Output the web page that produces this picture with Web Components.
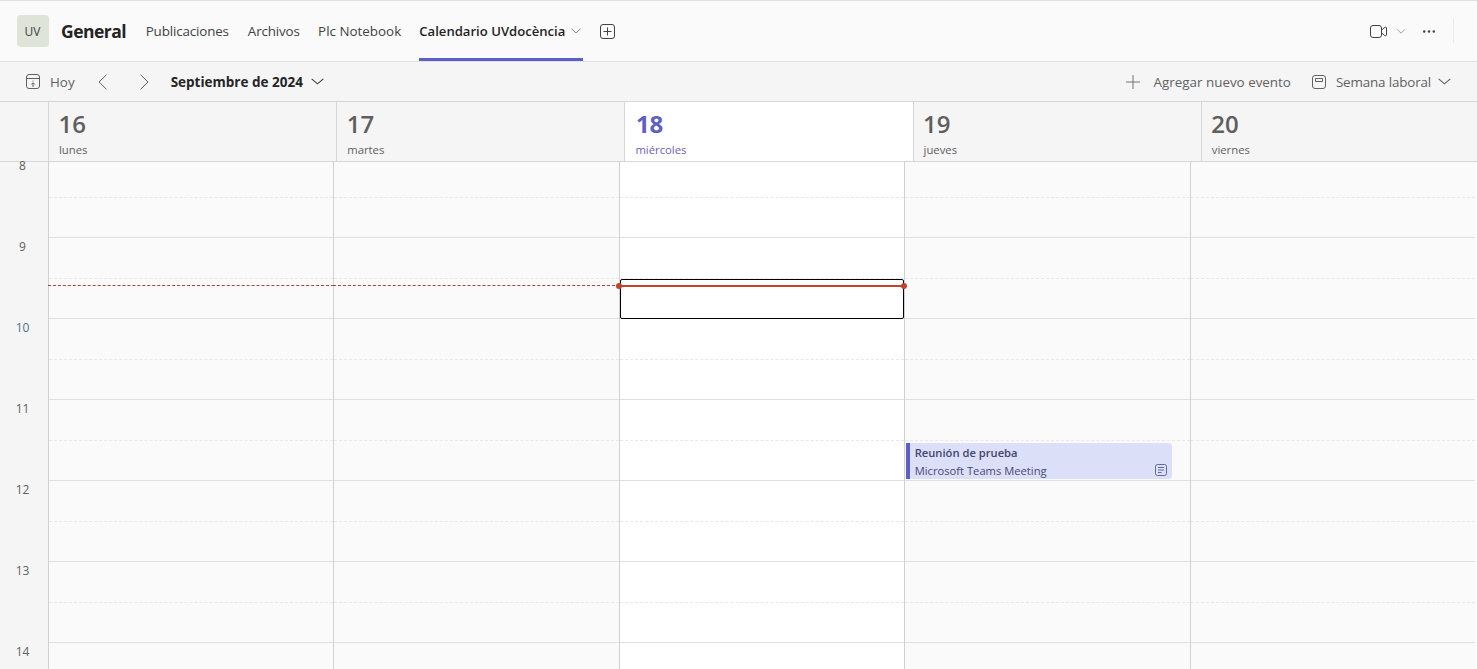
<!doctype html>
<html lang="es"><head><meta charset="utf-8"><style>
html,body{margin:0;height:100%;overflow:hidden;background:#fff}
body{font-family:"Open Sans","Noto Sans",sans-serif;color:#424242}
</style></head><body>
<teams-app>
  <channel-bar></channel-bar>
  <cal-toolbar></cal-toolbar>
  <day-header></day-header>
  <cal-grid></cal-grid>
</teams-app>
<script>
const chev=(w,h,c='currentColor')=>`<svg viewBox="0 0 12 8" width="${w}" height="${h}" fill="none" stroke="${c}" preserveAspectRatio="none"><path d="M.6 1 6 6.6 11.4 1"/></svg>`;
class Base extends HTMLElement{
  constructor(){super();this.attachShadow({mode:'open'}).innerHTML=this.markup();}
}
class ChannelBar extends Base{markup(){return `<style>
:host{display:flex;align-items:center;flex:none;height:60px;background:#fafafa;border-top:1px solid #e0e0e0;border-bottom:1px solid #e0e0e0;padding-left:17px;font-size:13.4px;color:#424242}
.av{width:32px;height:32px;border-radius:4px;background:#dfe4d8;display:flex;align-items:center;justify-content:center;font-size:12px;color:#424242;flex:none;padding-right:1px;box-sizing:border-box}
.t{font-size:17.5px;font-weight:700;color:#242424;margin:0 19.5px 0 12px;letter-spacing:-.5px}
nav{display:flex;height:100%;gap:19px}
a{display:flex;align-items:center;height:100%;box-sizing:border-box;color:#424242;white-space:nowrap;letter-spacing:-.15px}
a.plc{letter-spacing:0;margin-left:-.6px}
a.on{font-weight:600;color:#242424;gap:6px;width:164px;border-bottom:3px solid #5b5fc7;padding-top:3px;font-size:13.1px;letter-spacing:0;margin-left:-.9px}
.add{margin-left:17px;display:flex}
.r{margin-left:auto;display:flex;align-items:center;height:100%;color:#424242}
.sep{width:1px;height:24px;background:#eaeaea;margin:0 23px 0 18px}
</style>
<div class="av">UV</div><div class="t">General</div>
<nav><a>Publicaciones</a><a>Archivos</a><a class="plc">Plc Notebook</a><a class="on">Calendario UVdocència <span style="display:flex;color:#616161">${chev(10,6)}</span></a></nav>
<span class="add"><svg width="15" height="15" viewBox="0 0 15 15" fill="none" stroke="#424242"><rect x=".5" y=".5" width="14" height="14" rx="2.5"/><path d="M7.5 3.5v8M3.5 7.5h8"/></svg></span>
<div class="r">
<svg width="17" height="13" viewBox="0 0 17 13" fill="none" stroke="#424242"><rect x=".5" y=".5" width="11" height="12" rx="2.5"/><path d="M11.5 5 15 2.3c.6-.4 1.5 0 1.5.7v7c0 .7-.9 1.1-1.5.7L11.5 8"/></svg>
<span style="display:flex;margin-left:10px;color:#757575">${chev(8,5)}</span>
<svg style="margin-left:18px" width="12" height="3" viewBox="0 0 12 3" fill="#424242"><circle cx="1.2" cy="1.5" r="1.2"/><circle cx="6" cy="1.5" r="1.2"/><circle cx="10.8" cy="1.5" r="1.2"/></svg>
<div class="sep"></div></div>`}}
class CalToolbar extends Base{markup(){return `<style>
:host{display:flex;align-items:center;flex:none;height:39px;background:#f5f5f5;border-bottom:1px solid #d6d6d6;padding-left:26px;font-size:13.4px;color:#616161}
b{font-weight:700;color:#242424;font-size:13.5px;white-space:nowrap}
.i{display:flex}.sp{margin-left:auto}
span{white-space:nowrap}
</style>
<svg class="i" width="14" height="15" viewBox="0 0 14 15" fill="none" stroke="#616161"><rect x=".5" y=".5" width="13" height="14" rx="2.5"/><path d="M.5 4.5h13M7 13V9M5.2 10.5 7 8.7l1.8 1.8"/><path d="M6.6 7h.8"/></svg>
<span style="margin-left:10px">Hoy</span>
<svg style="margin-left:23px" width="9" height="16" viewBox="0 0 9 16" fill="none" stroke="#616161"><path d="M8.5.7 1 8l7.5 7.3"/></svg>
<svg style="margin-left:33px" width="9" height="16" viewBox="0 0 9 16" fill="none" stroke="#616161"><path d="M.5.7 8 8 .5 15.3"/></svg>
<b style="margin-left:22px">Septiembre de 2024</b>
<span class="i" style="margin-left:8px;color:#424242">${chev(13,7)}</span>
<svg class="sp" width="14" height="14" viewBox="0 0 14 14" stroke="#757575"><path d="M7 0v14M0 7h14"/></svg>
<span style="margin-left:14px">Agregar nuevo evento</span>
<svg style="margin-left:21px" width="14" height="14" viewBox="0 0 14 14" fill="none" stroke="#616161"><rect x=".5" y=".5" width="13" height="13" rx="2.5"/><path d="M3.5 3.5h7v3h-7z"/></svg>
<span style="margin-left:10px;letter-spacing:-.15px">Semana laboral</span>
<span class="i" style="margin:0 26px 0 7px">${chev(13,7,'#616161')}</span>`}}
class DayHeader extends Base{markup(){
 const d=[['16','lunes'],['17','martes'],['18','miércoles',1],['19','jueves'],['20','viernes']];
 return `<style>
:host{display:grid;grid-template-columns:48px repeat(5,288.2px);flex:none;height:59px;background:#f5f5f5;border-bottom:1px solid #d6d6d6;width:1490px}
div{border-left:1px solid #d6d6d6;box-sizing:border-box;padding-left:9.5px;color:#616161;height:59px}
div.g{border:0}
div.on{background:#fff;color:#5b5fc7;padding-left:10.5px}
b{display:block;font-size:24px;font-weight:600;line-height:30px;margin-top:7px;color:#5e5e5e}
.on b{color:#5b5fc7;font-weight:700}
i{display:block;font-style:normal;font-size:11.3px;line-height:16px;margin-top:3px;margin-left:.5px}
.on i{color:#6b5fc7;margin-left:-.5px}
</style><div class="g"></div>${d.map(x=>`<div class="${x[2]?'on':''}"><b>${x[0]}</b><i>${x[1]}</i></div>`).join('')}`}}
class CalGrid extends Base{markup(){
 const hts=[35,39,40,39,40,39,40,39,40,39,40,39,40,39];
 const rows=hts.map((h,i)=>`<div class="s ${i%2?'h':'d'}" style="height:${h}px"></div>`).join('');
 return `<style>
:host{display:grid;grid-template-columns:48px repeat(5,285.4px);flex:1;min-height:0;width:1476px;background:#fafafa}
.g{background:#f5f5f5;display:flex;flex-direction:column;align-items:center;font-size:12px;color:#616161}
.g span{flex:none;height:81px;line-height:16px;padding-right:3px}
.g span.first{height:77px;line-height:8px}
.c{border-left:1px solid #d1d1d1;box-sizing:border-box;position:relative;background:#fafafa;min-width:0}
.c.on{background:#fff;z-index:1}
.s.d{border-bottom:1px dashed #e8e8e8}
.s.h{border-bottom:1px solid #e0e0e0}
.dash{position:absolute;left:-1px;right:-1px;top:123px;border-top:1px dashed #a4483c}
.focus{position:absolute;left:0;right:0;top:117px;height:40px;border:1px solid #000;border-radius:2px;box-sizing:border-box}
.now{position:absolute;left:-1px;right:-1px;top:123px;height:2px;background:#c4422b}
.now:before,.now:after{content:"";position:absolute;top:-2px;width:6px;height:6px;border-radius:50%;background:#c4422b}
.now:before{left:-3px}.now:after{right:-2px}
.ev{position:absolute;left:1px;top:281px;width:266px;height:36px;box-sizing:border-box;background:#dcdff8;border-left:4px solid #5b5fc7;border-radius:0 4px 4px 0;padding:1px 0 0 4.5px;font-size:11.2px;line-height:18px;white-space:nowrap}
.ev b{display:block;font-weight:600;color:#43446c}
.ev span{display:block;color:#484a74}
.ev svg{position:absolute;right:5px;bottom:3px}
</style>
<div class="g"><span class="first">8</span><span>9</span><span style="color:#4f6f8f">10</span><span>11</span><span>12</span><span>13</span><span>14</span></div>
<div class="c">${rows}<div class="dash"></div></div>
<div class="c">${rows}<div class="dash"></div></div>
<div class="c on">${rows}<div class="focus"></div><div class="now"></div></div>
<div class="c">${rows}<div class="ev"><b>Reunión de prueba</b><span>Microsoft Teams Meeting</span><svg width="12" height="12" viewBox="0 0 12 12" fill="none" stroke="#616a99"><rect x=".5" y=".5" width="11" height="11" rx="2"/><path d="M3 3.5h6M3 6h6M3 8.5h3.5"/></svg></div></div>
<div class="c">${rows}</div>`}}
customElements.define('teams-app',class extends HTMLElement{constructor(){super();this.attachShadow({mode:'open'}).innerHTML='<style>:host{display:flex;flex-direction:column;height:669px;width:1477px;overflow:hidden}</style><slot></slot>'}});
customElements.define('channel-bar',ChannelBar);
customElements.define('cal-toolbar',CalToolbar);
customElements.define('day-header',DayHeader);
customElements.define('cal-grid',CalGrid);
</script>
</body></html>
